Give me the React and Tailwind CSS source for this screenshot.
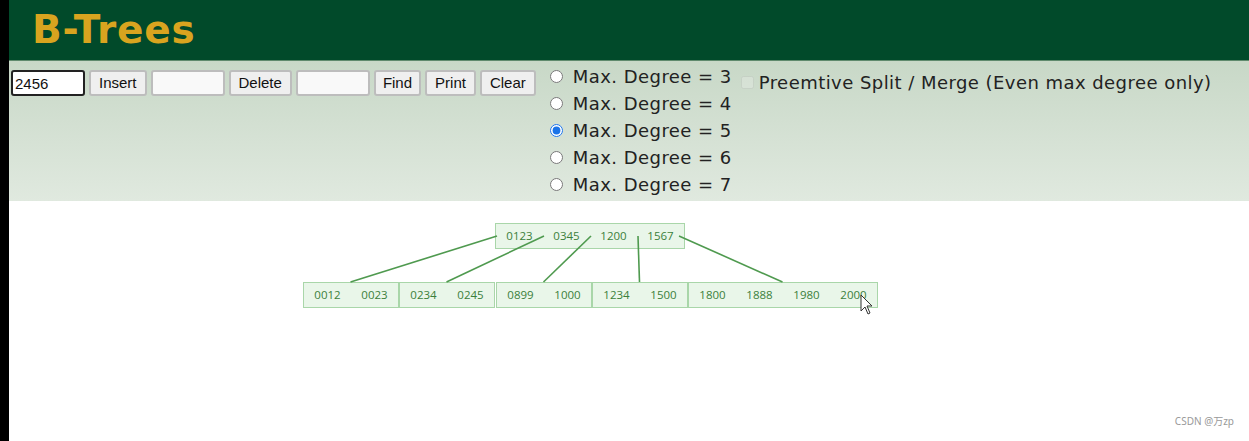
import React from "react";

const ROOT = { x: 495, y: 223, keys: ["0123", "0345", "1200", "1567"] };
const LEAVES = [
  { x: 303, keys: ["0012", "0023"] },
  { x: 399, keys: ["0234", "0245"] },
  { x: 496, keys: ["0899", "1000"] },
  { x: 592, keys: ["1234", "1500"] },
  { x: 688, keys: ["1800", "1888", "1980", "2000"] },
];
const CELL = 47;
const LEAF_Y = 282;
const NODE_H = 25;

function TreeNode({ x, y, keys }) {
  const w = keys.length * CELL + 1;
  return (
    <rect x={x + 0.5} y={y + 0.5} width={w} height={NODE_H} fill="#e9f6e9" stroke="#a9d6a9" strokeWidth="1" />
  );
}

function NodeKeys({ x, y, keys }) {
  return keys.map((k, i) => (
    <text
      key={k}
      x={x + CELL * i + CELL / 2 + 1}
      y={y + 17}
      textAnchor="middle"
      fontSize="11.5"
      fill="#3b7f3b"
      style={{ fontFamily: '"Open Sans", "Noto Sans", sans-serif' }}
    >
      {k}
    </text>
  ));
}

function Tree() {
  return (
    <svg width="1240" height="240" viewBox="9 201 1240 240" className="block">
      {[ROOT, ...LEAVES.map((l) => ({ ...l, y: LEAF_Y }))].map((n, i) => (
        <TreeNode key={i} {...n} />
      ))}
      {LEAVES.map((l, i) => {
        const cx = l.x + (l.keys.length * CELL + 1) / 2;
        const rx = ROOT.x + 2 + CELL * i - (i === 4 ? 6 : 0);
        return <line key={i} x1={rx} y1={236} x2={cx} y2={LEAF_Y} stroke="#4f9a4f" strokeWidth="1.6" />;
      })}
      <NodeKeys {...ROOT} />
      {LEAVES.map((l, i) => (
        <NodeKeys key={i} x={l.x} y={LEAF_Y} keys={l.keys} />
      ))}
      <path d="M861 295 L861 311 L865 307 L868 314 L870 313 L867 306 L872 306 Z" fill="#fff" stroke="#333" strokeWidth="1" />
    </svg>
  );
}

const btn = "h-[26px] bg-[#efefef] border-2 border-[#bdbdbd] rounded-[3px]";
const field = "w-[74px] h-[26px] bg-[#f9f9f9] border-2 border-[#bdbdbd] rounded-[3px]";
const verdana = { fontFamily: '"DejaVu Sans", Verdana, sans-serif' };

export default function App() {
  const degrees = [3, 4, 5, 6, 7];
  return (
    <div className="flex w-[1249px] h-[441px] overflow-hidden bg-white" style={{ fontFamily: '"Liberation Sans", Arial, sans-serif' }}>
      <div className="w-[9px] shrink-0 bg-black" />
      <div className="flex-1 flex flex-col relative">
        <div className="h-[61px] bg-[#014a2a] flex items-center pl-[23px] border-b border-[#5f8a6d]">
          <h1 className="text-[39px] font-bold text-[#d9a41f] leading-none pb-[2px] tracking-[0.8px]" style={verdana}>
            B-Trees
          </h1>
        </div>

        <div className="h-[140px] bg-gradient-to-b from-[#c8d8c7] to-[#e0e9df] flex items-start pl-[2px] pt-[9px]">
          <div className="flex items-center gap-[4px] text-[15px] text-[#111]">
            <input defaultValue="2456" className="w-[74px] h-[26px] bg-white border-2 border-[#222] rounded-[3px] px-[2px] text-[15px] outline-none" />
            <button className={`${btn} px-[8px]`}>Insert</button>
            <input className={field} />
            <button className={`${btn} px-[8px]`}>Delete</button>
            <input className={field} />
            <button className={`${btn} px-[7px]`}>Find</button>
            <button className={`${btn} px-[8px]`}>Print</button>
            <button className={`${btn} px-[8px]`}>Clear</button>
          </div>

          <div className="ml-[11px] -mt-[7px] flex flex-col text-[18px] tracking-[0.45px] text-[#222]" style={verdana}>
            {degrees.map((d) => (
              <label key={d} className="h-[27px] flex items-center gap-[7px]">
                <input type="radio" name="deg" defaultChecked={d === 5} className="w-[13px] h-[13px] m-[3px] accent-[#1a73e8]" />
                <span>Max. Degree = {d}</span>
              </label>
            ))}
          </div>

          <label className="ml-[9px] -mt-[1px] h-[27px] flex items-center gap-[5px] text-[18px] tracking-[0.45px] text-[#222]" style={verdana}>
            <input type="checkbox" disabled className="w-[13px] h-[13px] m-0 opacity-40" />
            <span>Preemtive Split / Merge (Even max degree only)</span>
          </label>
        </div>

        <Tree />

        <div className="absolute right-[15px] bottom-[12px] text-[10px] text-[#999]" style={{ fontFamily: '"Noto Sans", "Noto Sans CJK SC", sans-serif' }}>
          CSDN @万zp
        </div>
      </div>
    </div>
  );
}
